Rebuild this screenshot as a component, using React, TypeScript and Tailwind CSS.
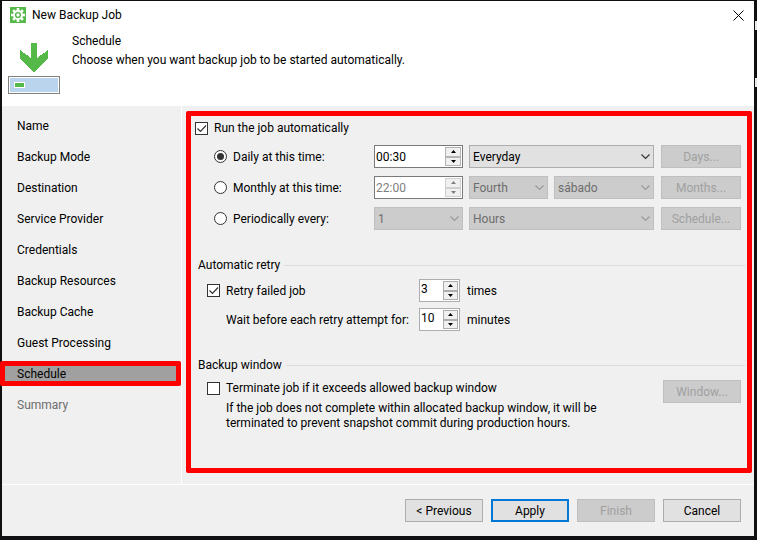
import type { ButtonHTMLAttributes, ReactNode, SelectHTMLAttributes } from 'react';
import { clsx } from 'clsx';

const steps = [
  'Name',
  'Backup Mode',
  'Destination',
  'Service Provider',
  'Credentials',
  'Backup Resources',
  'Backup Cache',
  'Guest Processing',
  'Schedule',
  'Summary',
];

function GearIcon() {
  return (
    <svg width="16" height="16" viewBox="0 0 16 16" aria-hidden="true">
      <rect width="16" height="16" fill="#54b948" />
      <g fill="#fff">
        {[0, 45, 90, 135].map((deg) => (
          <rect key={deg} x="6.700" y="1" width="2.600" height="14" transform={`rotate(${deg} 8 8)`} />
        ))}
        <circle cx="8" cy="8" r="4.9" />
      </g>
      <circle cx="8" cy="8" r="2.4" fill="none" stroke="#54b948" strokeWidth="1.400" />
    </svg>
  );
}

function BackupIcon() {
  return (
    <svg width="52" height="51" viewBox="0 0 52 51" shapeRendering="crispEdges" aria-hidden="true">
      <path d="M23 0h6v15l11-8v9L26 29 12 16V7l11 8z" fill="#54b948" />
      <rect x="0.5" y="33.5" width="51" height="17" fill="#fff" stroke="#7f7f7f" />
      <rect x="2" y="35" width="48" height="14" fill="#bad4ee" />
      <rect x="6" y="39" width="11" height="6" fill="#fff" />
      <rect x="7" y="40" width="9" height="4" fill="#54b948" />
    </svg>
  );
}

interface ButtonProps extends ButtonHTMLAttributes<HTMLButtonElement> {
  primary?: boolean;
}

function Button({ className, primary, ...props }: ButtonProps) {
  return (
    <button
      type="button"
      className={clsx(
        'h-[23px] shrink-0 bg-[#e1e1e1] leading-4 disabled:border-[#bfbfbf] disabled:bg-[#cccccc] disabled:text-[#a0a0a0]',
        primary ? 'border-2 border-[#0078d7]' : 'border border-[#adadad]',
        className,
      )}
      {...props}
    />
  );
}

function Select({ className, children, ...props }: SelectHTMLAttributes<HTMLSelectElement> & { children: ReactNode }) {
  return (
    <div className={clsx('relative', className, props.disabled ? 'text-[#6d6d6d]' : 'text-black')}>
      <select
        className="block h-[23px] w-full appearance-none border border-[#adadad] bg-[#e1e1e1] pl-[3px] disabled:border-[#bfbfbf] disabled:bg-[#cccccc] disabled:opacity-100"
        {...props}
      >
        {children}
      </select>
      <svg
        className={clsx('pointer-events-none absolute top-[9px] right-1', props.disabled ? 'text-[#9a9a9a]' : 'text-[#333333]')}
        width="9"
        height="6"
        viewBox="0 0 9 6"
        fill="none"
        stroke="currentColor"
        aria-hidden="true"
      >
        <path d="M.5.5l4 4 4-4" strokeWidth="1.2" />
      </svg>
    </div>
  );
}

function SpinButton({ up, dark, disabled }: { up?: boolean; dark?: boolean; disabled?: boolean }) {
  return (
    <button
      type="button"
      aria-label={up ? 'Increase' : 'Decrease'}
      disabled={disabled}
      className={clsx(
        'flex flex-1 items-center justify-center border bg-[#f0f0f0]',
        disabled ? 'border-[#d0d0d0] text-[#808080]' : 'text-black',
        !disabled && (dark ? 'border-[#adadad]' : 'border-[#b4b4b4]'),
      )}
    >
      <svg width="5" height="3" viewBox="0 0 5 3" fill="currentColor" aria-hidden="true">
        <path d={up ? 'M0 3L2.5 0 5 3z' : 'M0 0h5L2.5 3z'} />
      </svg>
    </button>
  );
}

interface SpinnerProps {
  label: string;
  value: string;
  time?: boolean;
  disabled?: boolean;
}

function Spinner({ label, value, time, disabled }: SpinnerProps) {
  return (
    <div
      className={clsx(
        'flex h-[23px] border bg-white p-px',
        time ? 'w-[89px] border-[#7a7a7a]' : 'w-[41px] border-[#abadb3]',
      )}
    >
      <input
        aria-label={label}
        defaultValue={value}
        disabled={disabled}
        className={clsx('min-w-0 flex-1 leading-4 outline-none disabled:text-[#808080]', !time && 'pb-1')}
      />
      <div className={clsx('flex shrink-0 flex-col', time ? 'w-4' : 'w-[15px]')}>
        <SpinButton up dark={!time} disabled={disabled} />
        <SpinButton dark={!time} disabled={disabled} />
      </div>
    </div>
  );
}

function Checkbox({ label, checked }: { label: string; checked?: boolean }) {
  return (
    <label className="flex items-center gap-1.5">
      <span className="relative block size-[13px]">
        <input
          type="checkbox"
          defaultChecked={checked}
          className="peer block size-[13px] appearance-none border border-[#333333] bg-white"
        />
        <svg
          className="pointer-events-none absolute inset-0 hidden peer-checked:block"
          width="13"
          height="13"
          viewBox="0 0 13 13"
          fill="none"
          stroke="#333333"
          strokeWidth="1.2"
          aria-hidden="true"
        >
          <path d="M2.5 6.5l3 3 5.500-6" />
        </svg>
      </span>
      {label}
    </label>
  );
}

function Radio({ label, checked }: { label: string; checked?: boolean }) {
  return (
    <label className="flex flex-1 items-center gap-1.5">
      <span className="relative block size-[13px]">
        <input
          type="radio"
          name="frequency"
          defaultChecked={checked}
          className="peer block size-[13px] appearance-none rounded-full border border-[#333333] bg-white"
        />
        <span className="pointer-events-none absolute inset-[3px] hidden rounded-full bg-[#333333] peer-checked:block" />
      </span>
      {label}
    </label>
  );
}

function GroupTitle({ children }: { children: ReactNode }) {
  return (
    <h2 className="flex h-4 items-center gap-1 pr-0.5 pl-[7px]">
      {children}
      <span className="h-px flex-1 bg-[#dcdcdc]" />
    </h2>
  );
}

export default function App() {
  return (
    <div className="relative flex min-h-screen flex-col bg-[#101012] pt-px pr-[3px] pb-1 pl-0.5 font-['Roboto',sans-serif] text-[12px] leading-4 text-black">
      {/* slivers of the desktop behind the dialog */}
      <span className="absolute top-[21px] right-0 h-[9px] w-0.5 bg-[#e8e8e8]" />
      <span className="absolute top-[78px] right-0 h-[9px] w-0.5 bg-[#e8e8e8]" />

      <header className="bg-white pb-3">
        <div className="flex h-7 items-center gap-1.5 pr-2.5 pl-2">
          <GearIcon />
          <h1 className="flex-1">New Backup Job</h1>
          <button type="button" aria-label="Close">
            <svg width="11" height="11" viewBox="0 0 11 11" stroke="#000" aria-hidden="true">
              <path d="M.5.500l10 10M10.500.500l-10 10" />
            </svg>
          </button>
        </div>
        <div className="flex gap-3 pt-3.5 pl-1.5">
          <BackupIcon />
          <div className="-mt-2.5 flex flex-col gap-[3px]">
            <p>Schedule</p>
            <p>Choose when you want backup job to be started automatically.</p>
          </div>
        </div>
      </header>

      <div className="flex flex-1 bg-[#f0f0f0]">
        <nav className="w-[180px] shrink-0 border-r border-white pt-2">
          <ul className="flex flex-col gap-2">
            {steps.map((step) => (
              <li
                key={step}
                className={clsx(
                  'relative flex h-[23px] items-center pl-[15px]',
                  step === 'Schedule' && 'bg-[#a0a0a0]',
                  step === 'Summary' && 'text-[#6d6d6d]',
                )}
              >
                {step}
                {step === 'Schedule' && (
                  <span className="absolute -inset-y-px right-0 -left-[2px] rounded-[2px] border-5 border-[#ff0000]" />
                )}
              </li>
            ))}
          </ul>
        </nav>

        <main className="flex-1 pt-[5px] pr-0.5 pb-[11px] pl-1">
          <div className="h-full rounded-[2px] border-5 border-[#ff0000]">
            <div className="pt-1 pl-1">
              <Checkbox label="Run the job automatically" checked />
            </div>

            <div className="flex flex-col gap-2 pt-[9px] pr-1.5 pl-[23px]">
              <div className="flex items-center">
                <Radio label="Daily at this time:" checked />
                <Spinner label="Daily time" value="00:30" time />
                <Select aria-label="Days" className="ml-1.5 w-[185px]">
                  <option>Everyday</option>
                </Select>
                <Button disabled className="ml-[7px] w-20">Days...</Button>
              </div>
              <div className="flex items-center">
                <Radio label="Monthly at this time:" />
                <Spinner label="Monthly time" value="22:00" time disabled />
                <Select aria-label="Week" disabled className="ml-1.5 w-[79px]">
                  <option>Fourth</option>
                </Select>
                <Select aria-label="Weekday" disabled className="ml-1.5 w-[100px]">
                  <option>sábado</option>
                </Select>
                <Button disabled className="ml-[7px] w-20">Months...</Button>
              </div>
              <div className="flex items-center">
                <Radio label="Periodically every:" />
                <Select aria-label="Interval" disabled className="w-[89px]">
                  <option>1</option>
                </Select>
                <Select aria-label="Unit" disabled className="ml-1.5 w-[185px]">
                  <option>Hours</option>
                </Select>
                <Button disabled className="ml-[7px] w-20">Schedule...</Button>
              </div>
            </div>

            <section className="pt-[27px]">
              <GroupTitle>Automatic retry</GroupTitle>
              <div className="grid grid-cols-[212px_auto_1fr] items-center gap-y-1.5 pt-1.5 pl-4">
                <Checkbox label="Retry failed job" checked />
                <Spinner label="Retry count" value="3" />
                <span className="pl-[7px]">times</span>
                <span className="pl-[19px] whitespace-nowrap">Wait before each retry attempt for:</span>
                <Spinner label="Retry delay" value="10" />
                <span className="pl-[7px]">minutes</span>
              </div>
            </section>

            <section className="pt-[26px]">
              <GroupTitle>Backup window</GroupTitle>
              <div className="flex justify-between pt-[7px] pr-1.5 pl-4">
                <div>
                  <Checkbox label="Terminate job if it exceeds allowed backup window" />
                  <p className="max-w-[400px] pt-[5px] pl-[19px] leading-[15px]">
                    If the job does not complete within allocated backup window, it will be terminated to prevent
                    snapshot commit during production hours.
                  </p>
                </div>
                <Button disabled className="w-[78px]">Window...</Button>
              </div>
            </section>
          </div>
        </main>
      </div>

      <footer className="flex justify-end gap-2 border-t border-white bg-[#f0f0f0] pt-3.5 pr-[13px] pb-3.5">
        <Button className="w-[78px]">&lt; Previous</Button>
        <Button primary className="w-[78px]">Apply</Button>
        <Button disabled className="w-[78px]">Finish</Button>
        <Button className="w-[78px]">Cancel</Button>
      </footer>
    </div>
  );
}
